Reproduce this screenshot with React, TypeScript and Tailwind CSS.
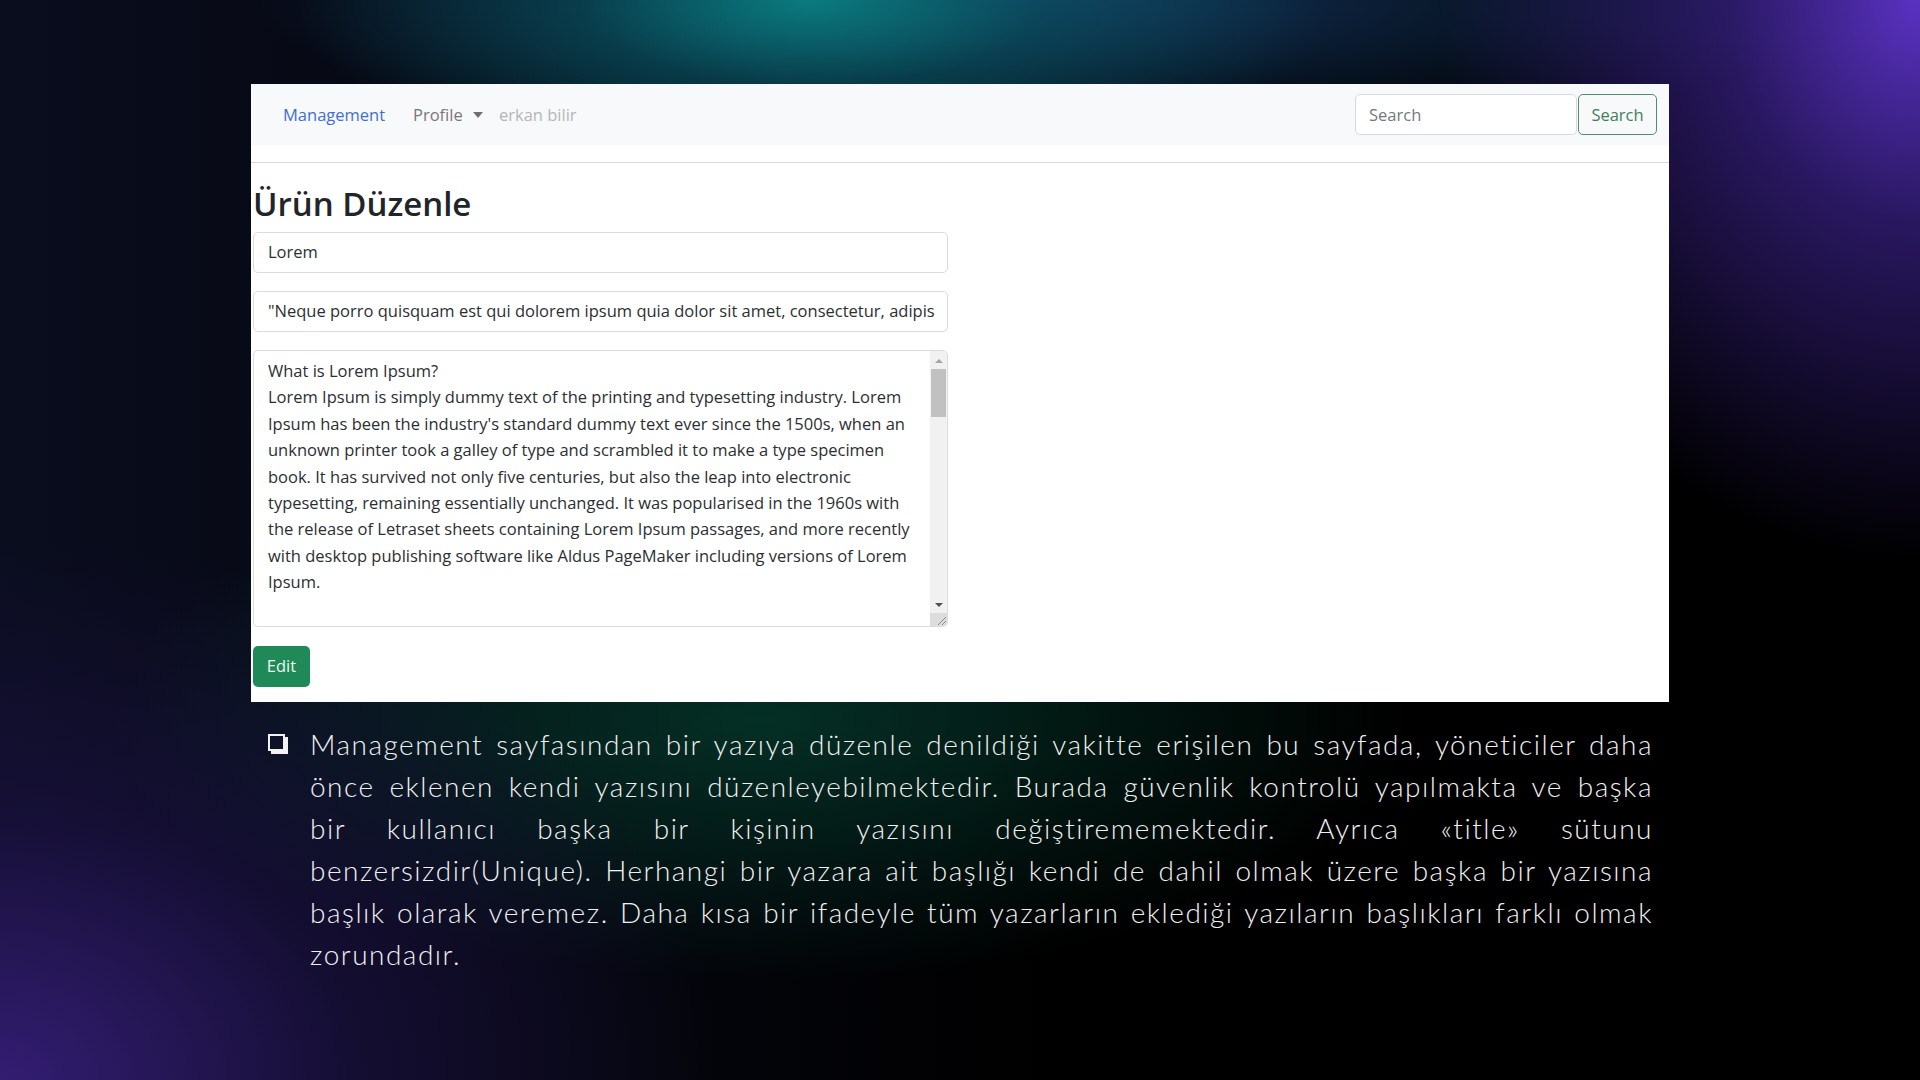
import React from "react";

const taLines = [
  "What is Lorem Ipsum?",
  "Lorem Ipsum is simply dummy text of the printing and typesetting industry. Lorem",
  "Ipsum has been the industry's standard dummy text ever since the 1500s, when an",
  "unknown printer took a galley of type and scrambled it to make a type specimen",
  "book. It has survived not only five centuries, but also the leap into electronic",
  "typesetting, remaining essentially unchanged. It was popularised in the 1960s with",
  "the release of Letraset sheets containing Lorem Ipsum passages, and more recently",
  "with desktop publishing software like Aldus PageMaker including versions of Lorem",
  "Ipsum.",
];

const slideLines = [
  "Management sayfasından bir yazıya düzenle denildiği vakitte erişilen bu sayfada, yöneticiler daha",
  "önce eklenen kendi yazısını düzenleyebilmektedir. Burada güvenlik kontrolü yapılmakta ve başka",
  "bir kullanıcı başka bir kişinin yazısını değiştirememektedir. Ayrıca «title» sütunu",
  "benzersizdir(Unique). Herhangi bir yazara ait başlığı kendi de dahil olmak üzere başka bir yazısına",
  "başlık olarak veremez. Daha kısa bir ifadeyle tüm yazarların eklediği yazıların başlıkları farklı olmak",
];

export default function App() {
  return (
    <div className="w-[1920px] h-[1080px] overflow-hidden bg-black bg-[radial-gradient(ellipse_520px_190px_at_810px_0px,rgba(10,128,130,0.95)_0%,rgba(8,90,100,0.55)_45%,transparent_100%),radial-gradient(ellipse_480px_560px_at_1920px_0px,#5a32c2_0%,rgba(62,36,146,0.65)_40%,transparent_100%),radial-gradient(ellipse_800px_150px_at_1050px_0px,rgba(22,58,104,0.85)_0%,transparent_100%),radial-gradient(ellipse_720px_540px_at_0px_1080px,#331d72_0%,rgba(28,17,68,0.6)_50%,transparent_100%),radial-gradient(ellipse_650px_260px_at_760px_720px,rgba(4,52,40,0.9)_0%,transparent_100%),linear-gradient(to_right,#0a0d1e_0%,#000_55%)] pt-[84px] pl-[251px]">
      <div className="w-[1418px] h-[618px] bg-white flex flex-col font-['Open_Sans',sans-serif] text-[16.5px]">
        <nav className="h-[61px] shrink-0 bg-[#f8f9fa] flex items-center pl-[32px] pr-[12px] leading-[24px]">
          <span className="w-[130px] text-[#3f6fd0]">Management</span>
          <span className="w-[86px] flex items-center text-[#787878]">
            Profile
            <span className="ml-[10px] w-0 h-0 border-x-[5px] border-x-transparent border-t-[6px] border-t-[#6f6f6f]" />
          </span>
          <span className="text-[#b6b6b6]">erkan bilir</span>
          <div className="ml-auto flex gap-px">
            <div className="w-[222px] h-[41px] border border-[#d8dbde] rounded-[5px] bg-white pl-[13px] flex items-center text-[#737980]">
              Search
            </div>
            <div className="w-[79px] h-[41px] border border-[#4f8d6c] rounded-[5px] text-[#3f7f5e] flex items-center justify-center">
              Search
            </div>
          </div>
        </nav>
        <div className="mt-[17px] h-px bg-[#d9d9d9]" />
        <div className="pl-[2px] w-[697px] flex flex-col text-[#2b2f33]">
          <h1 className="mt-[21px] text-[33px] leading-[40px] font-semibold text-[#212529]">Ürün Düzenle</h1>
          <div className="mt-[8px] h-[41px] border border-[#dadcdf] rounded-[5px] flex items-center pl-[14px]">Lorem</div>
          <div className="mt-[18px] h-[41px] border border-[#dadcdf] rounded-[5px] flex items-center pl-[14px] overflow-hidden whitespace-nowrap">
            "Neque porro quisquam est qui dolorem ipsum quia dolor sit amet, consectetur, adipis
          </div>
          <div className="mt-[18px] h-[277px] border border-[#dadcdf] rounded-[5px] flex overflow-hidden">
            <div className="flex-1 pl-[14px] pt-[7px] leading-[26.4px]">
              {taLines.map((l, i) => (
                <div key={i} className="whitespace-nowrap">{l}</div>
              ))}
            </div>
            <div className="w-[17px] shrink-0 bg-[#f1f1f1] flex flex-col items-center pt-[8px]">
              <span className="w-0 h-0 border-x-[4px] border-x-transparent border-b-[4px] border-b-[#a3a3a3]" />
              <div className="mt-[6px] w-[15px] h-[48px] bg-[#c1c1c1]" />
              <div className="flex-1" />
              <span className="mb-[6px] w-0 h-0 border-x-[4px] border-x-transparent border-t-[4px] border-t-[#505050]" />
              <div className="w-[17px] h-[13px] bg-[#dcdcdc] flex items-end justify-end">
                <svg width="12" height="12" viewBox="0 0 12 12">
                  <line x1="11" y1="3" x2="3" y2="11" stroke="#8a8a8a" strokeWidth="1" />
                  <line x1="11" y1="7" x2="7" y2="11" stroke="#8a8a8a" strokeWidth="1" />
                </svg>
              </div>
            </div>
          </div>
          <div className="mt-[19px] w-[57px] h-[41px] rounded-[5px] bg-[#1f8a58] text-[#eef7f1] flex items-center justify-center">
            Edit
          </div>
        </div>
      </div>
      <div className="mt-[21px] ml-[17px] w-[1385px] flex text-[#f0f0f0] font-['Lato',sans-serif] font-light text-[28px] leading-[42px] tracking-[1.5px]">
        <div className="w-[42px] shrink-0 pt-[11px]">
          <div className="w-[17px] h-[17px] border-2 border-[#f2f2f2] shadow-[3px_3px_0_0_#f2f2f2]" />
        </div>
        <div className="flex-1">
          {slideLines.map((l, i) => (
            <div key={i} className="whitespace-nowrap text-justify [text-align-last:justify]">{l}</div>
          ))}
          <div>zorundadır.</div>
        </div>
      </div>
    </div>
  );
}
